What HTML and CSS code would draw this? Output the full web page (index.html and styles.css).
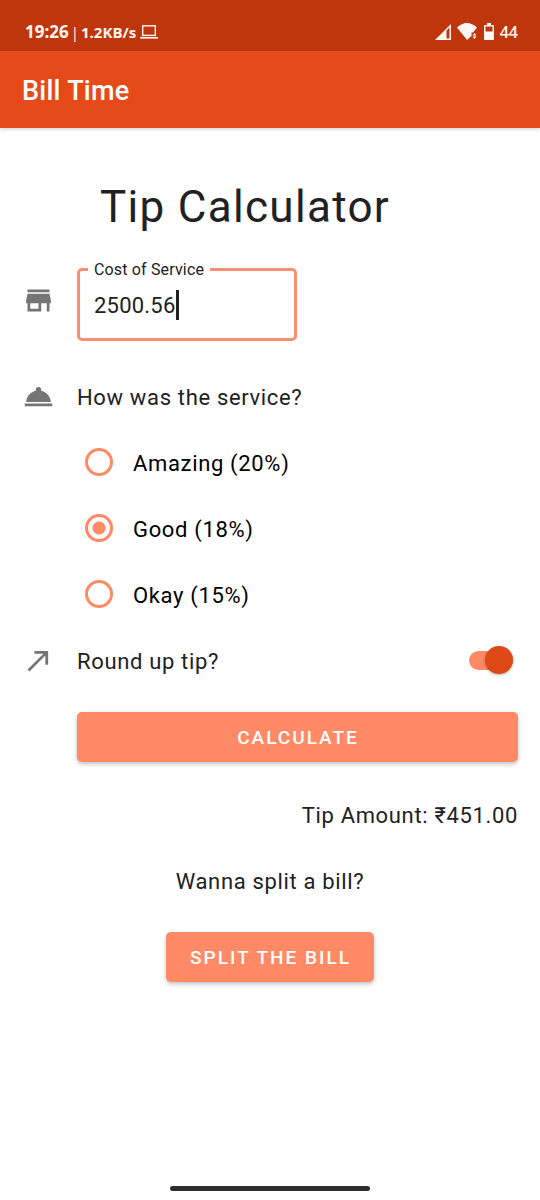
FILE: index.html
```html
<!DOCTYPE html>
<html lang="en">
<head>
<meta charset="utf-8">
<meta name="viewport" content="width=device-width, initial-scale=1">
<title>Bill Time</title>
<link rel="stylesheet" href="styles.css">
</head>
<body>
<div class="status-bar">
  <div class="status-group">
    <span class="clock">19:26</span><span class="divider">|</span><span>1.2KB/s</span>
    <svg class="laptop" width="18" height="14" viewBox="0 0 18 14" fill="none" stroke="currentColor"><rect x="2.7" y=".8" width="12.6" height="9.6" stroke-width="1.4"/><path d="M0 12.8h18" stroke-width="1.6"/></svg>
  </div>
  <div class="status-group status-right">
    <svg width="16" height="16" viewBox="0 0 16 16" fill="currentColor"><path fill-rule="evenodd" d="M0 16 16 0V16ZM11.5 6.500V14.500H14.500V3.500Z"/></svg>
    <svg width="21" height="17" viewBox="0 0 21 17" fill="currentColor"><path d="M0 4.500Q10-4.500 20 4.500L16 9.500H14.500V13L10 17Z"/><path d="m17.500 10 2 2.500h-4zM15.500 13.500h4l-2 2.500z"/></svg>
    <svg width="10" height="17" viewBox="0 0 10 17" fill="currentColor"><path fill-rule="evenodd" d="M3 0H7V2H9Q10 2 10 3V16Q10 17 9 17H1Q0 17 0 16V3Q0 2 1 2H3ZM1.500 3.500V8.500H8.500V3.500Z"/></svg>
    <span class="battery">44</span>
  </div>
</div>
<header class="app-bar">Bill Time</header>
<main class="content">
  <h1 class="title">Tip Calculator</h1>
  <form class="tip-form">
    <div class="row cost-row">
      <svg class="icon" viewBox="0 0 24 24"><path d="M20 4H4v2h16V4zm1 10v-2l-1-5H4l-1 5v2h1v6h10v-6h4v6h2v-6h1zm-9 4H6v-4h6v4z"/></svg>
      <div class="text-field">
        <label class="field-label" for="cost">Cost of Service</label>
        <input class="field-input" id="cost" type="text" inputmode="decimal" size="7" value="2500.56"><span class="caret"></span>
      </div>
    </div>
    <div class="row">
      <svg class="icon" viewBox="0 0 24 24"><path d="M2 17h20v2H2zm11.840-9.210A2.006 2.006 0 0 0 12 5a2.006 2.006 0 0 0-1.840 2.790C6.250 8.600 3.270 11.930 3 16h18c-.270-4.070-3.250-7.400-7.160-8.210z"/></svg>
      <span class="text" id="question">How was the service?</span>
    </div>
    <div class="options" role="radiogroup" aria-labelledby="question">
      <label class="option"><input class="radio" type="radio" name="service"><span class="text">Amazing (20%)</span></label>
      <label class="option"><input class="radio" type="radio" name="service" checked><span class="text">Good (18%)</span></label>
      <label class="option"><input class="radio" type="radio" name="service"><span class="text">Okay (15%)</span></label>
    </div>
    <div class="row">
      <svg class="icon" viewBox="0 0 24 24"><path d="M9 5v2h6.590L4 18.590 5.410 20 17 8.410V15h2V5z"/></svg>
      <label class="text round-label" for="round">Round up tip?</label>
      <input class="switch" id="round" type="checkbox" role="switch" checked>
    </div>
    <button class="button calculate" type="button">CALCULATE</button>
  </form>
  <p class="line amount">Tip Amount: ₹451.00</p>
  <p class="line split-text">Wanna split a bill?</p>
  <button class="button split" type="button">SPLIT THE BILL</button>
</main>
<div class="nav-bar"><span class="nav-handle"></span></div>
</body>
</html>
```
FILE: styles.css
```css
* {
  box-sizing: border-box;
}

body {
  margin: 0;
  min-height: 100vh;
  display: flex;
  flex-direction: column;
  background: #fff;
  color: #202122;
  font: 22px/30px Roboto, "Noto Sans", sans-serif;
}

.status-bar {
  display: flex;
  justify-content: space-between;
  align-items: center;
  padding: 12px 22px 0 25px;
  height: 51px;
  background: #bf360c;
  color: #fff8f4;
  font: 700 15px/24px "Open Sans", "Noto Sans", sans-serif;
}

.status-group {
  display: flex;
  align-items: center;
  gap: 2px;
}

.status-right {
  gap: 6px;
  font-size: 16px;
  font-weight: 600;
}

.clock {
  font-size: 17px;
}

.divider {
  font-weight: 400;
}

.laptop {
  margin-left: 2px;
}

.app-bar {
  padding: 25px 22px 22px;
  background: #e64a19;
  color: #fff;
  font-size: 27px;
  font-weight: 500;
  letter-spacing: 0.01em;
  box-shadow: 0 1px 4px rgba(0, 0, 0, 0.2);
}

.content {
  flex: 1;
  display: flex;
  flex-direction: column;
  padding: 49px 22px 24px;
  letter-spacing: 0.03em;
}

.title {
  margin: 0 50px 31px 0;
  font-size: 44px;
  line-height: 60px;
  font-weight: 400;
  letter-spacing: 0.03em;
  text-align: center;
}

.tip-form {
  display: flex;
  flex-direction: column;
}

.row {
  display: flex;
  align-items: center;
  gap: 22px;
  min-height: 66px;
}

.cost-row {
  margin-bottom: 23px;
}

.text {
  padding-top: 2px;
}

.icon {
  flex: none;
  width: 33px;
  height: 33px;
  margin-bottom: 2px;
  fill: #757575;
}

.cost-row .icon {
  margin-bottom: 9px;
}

.text-field {
  position: relative;
  display: flex;
  align-items: center;
  width: 220px;
  height: 73px;
  padding: 2px 14px 0;
  border: 3px solid #f79073;
  border-radius: 5px;
}

.field-label {
  position: absolute;
  top: -12px;
  left: 8px;
  padding: 0 6px;
  background: #fff;
  font-size: 16px;
  line-height: 22px;
  letter-spacing: 0.01em;
}

.field-input {
  field-sizing: content;
  max-width: 180px;
  padding: 0;
  border: 0;
  outline: 0;
  background: none;
  color: inherit;
  font: inherit;
  letter-spacing: 0.01em;
}

.caret {
  width: 3px;
  height: 30px;
  margin-bottom: 2px;
  background: #202122;
}

.options {
  padding-left: 63px;
  color: #000;
}

.option {
  display: flex;
  align-items: center;
  gap: 20px;
  height: 66px;
}

.radio {
  appearance: none;
  flex: none;
  width: 28px;
  height: 28px;
  margin: 0 0 2px;
  border: 3px solid #ff8a65;
  border-radius: 50%;
}

.radio:checked {
  background: radial-gradient(circle, #ff8a65 6px, transparent 7px);
}

.round-label {
  flex: 1;
}

.switch {
  appearance: none;
  display: flex;
  justify-content: flex-end;
  align-items: center;
  width: 44px;
  height: 19px;
  margin: 0 5px 2px 0;
  background: #ff8a65;
  border-radius: 10px;
}

.switch::before {
  content: "";
  flex: none;
  width: 28px;
  height: 28px;
  border-radius: 50%;
  background: #dd4a18;
  box-shadow: 0 1px 3px rgba(0, 0, 0, 0.3);
}

.button {
  height: 50px;
  padding: 2px 23px 0 24px;
  border: 0;
  border-radius: 5px;
  background: #ff8a65;
  color: #fff;
  font: 500 19px/26px Roboto, sans-serif;
  letter-spacing: 2px;
  box-shadow: 0 2px 4px rgba(0, 0, 0, 0.25);
}

.calculate {
  margin: 18px 0 20px 55px;
}

.line {
  margin: 0;
  padding: 19px 0 17px;
}

.amount {
  text-align: right;
}

.split-text {
  text-align: center;
}

.split {
  align-self: center;
  margin-top: 18px;
}

.nav-bar {
  display: flex;
  justify-content: center;
  padding-bottom: 9px;
}

.nav-handle {
  width: 200px;
  height: 5px;
  border-radius: 3px;
  background: #2d2d2d;
}
```
